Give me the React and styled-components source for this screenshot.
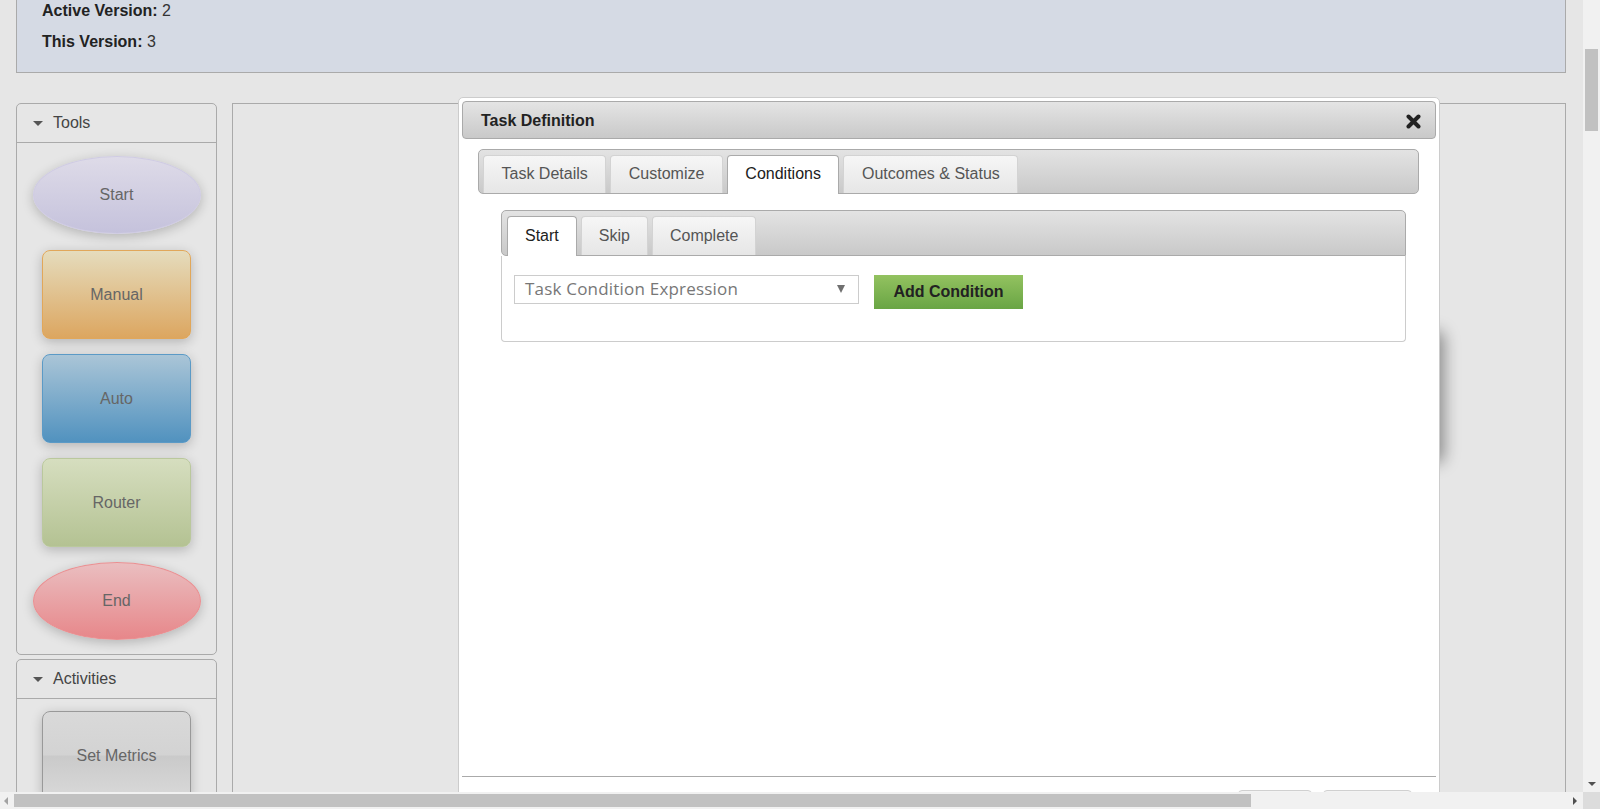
import React from 'react';
import styled, { createGlobalStyle, css } from 'styled-components';

const GlobalStyle = createGlobalStyle`
    html, body {
        margin: 0;
        padding: 0;
        overflow: hidden;
        background: #e6e6e6;
        font-family: "Liberation Sans", Arial, sans-serif;
    }
`;

const Viewport = styled.div`
    width: 1600px;
    height: 809px;
    display: grid;
    grid-template-columns: 1583px 17px;
    grid-template-rows: 792px 17px;
    overflow: hidden;
`;

const ScrollArea = styled.div`
    position: relative;
    overflow: hidden;
    background: #e6e6e6;
    padding: 0 17px 0 16px;
`;

const VersionBox = styled.div`
    margin-top: -11px;
    border: 1px solid #aaaaaa;
    background: #d5dae4;
    padding: 11px 25px 20px;
    display: flex;
    flex-direction: column;
    gap: 11px;
`;

const VersionLine = styled.div`
    font-size: 16px;
    line-height: 20px;
    color: #333;
    b {
        color: #222;
    }
`;

const MainRow = styled.div`
    display: flex;
    gap: 15px;
    margin-top: 30px;
    align-items: flex-start;
`;

const Sidebar = styled.div`
    width: 201px;
    flex-shrink: 0;
    display: flex;
    flex-direction: column;
    gap: 4px;
`;

const Panel = styled.div`
    border: 1px solid #aaaaaa;
    border-radius: 5px;
    background: #e6e6e6;
`;

const PanelHeader = styled.div`
    height: 38px;
    border-bottom: 1px solid #aaaaaa;
    display: flex;
    align-items: center;
    gap: 10px;
    padding-left: 16px;
    font-size: 16px;
    color: #444;
`;

const Caret = styled.span`
    width: 0;
    height: 0;
    border-left: 5px solid transparent;
    border-right: 5px solid transparent;
    border-top: 5px solid #555;
    margin-top: 1px;
`;

const PanelBody = styled.div`
    display: flex;
    flex-direction: column;
    align-items: center;
    gap: 15px;
    padding: ${(p) => p.$pad || '13px 0 14px'};
`;

const nodeLooks = {
    start: css`
        background: linear-gradient(#dedbe8, #c5c2dc);
        border-color: #cfcbe3;
        margin-bottom: 1px;
    `,
    manual: css`
        background: linear-gradient(#e5dcbd, #dca660);
        border-color: #e1a75a;
    `,
    auto: css`
        background: linear-gradient(#aac5d7, #5192bf);
        border-color: #5b9ac6;
    `,
    router: css`
        background: linear-gradient(#d6debf, #b4c293);
        border-color: #bac89d;
    `,
    end: css`
        background: linear-gradient(#eabec0, #e7878a);
        border-color: #ea8f91;
    `,
    metrics: css`
        background: linear-gradient(#d9d9d9 0%, #d3d3d3 49%, #cacaca 51%, #d9d9d9 100%);
        border-color: #999;
    `,
};

const Node = styled.div`
    box-sizing: border-box;
    display: flex;
    align-items: center;
    justify-content: center;
    font-size: 16px;
    color: #666;
    border: 1px solid;
    box-shadow: 0 3px 12px rgba(0, 0, 0, 0.22);
    flex-shrink: 0;
    ${(p) => p.$round
        ? css`
            width: 168px;
            height: 78px;
            border-radius: 50%;
        `
        : css`
            width: 149px;
            height: 89px;
            border-radius: 8px;
        `}
    ${(p) => nodeLooks[p.$kind]}
`;

const Canvas = styled.div`
    position: relative;
    flex: 1;
    height: 760px;
    border: 1px solid #aaaaaa;
    background: #e6e6e6;
`;

const HiddenNode = styled.div`
    position: absolute;
    left: 1067px;
    top: 225px;
    width: 140px;
    height: 132px;
    border-radius: 8px;
    background: #d8d8d8;
    box-shadow: 4px 2px 16px rgba(0, 0, 0, 0.4);
`;

const Dialog = styled.div`
    position: absolute;
    left: 458px;
    top: 97px;
    width: 982px;
    height: 760px;
    box-sizing: border-box;
    border: 1px solid #cccccc;
    border-radius: 5px;
    background: #ffffff;
    padding: 3px;
    display: flex;
    flex-direction: column;
`;

const TitleBar = styled.div`
    height: 35px;
    border: 1px solid #aaaaaa;
    border-radius: 4px;
    background: linear-gradient(#e4e4e4, #c9c9c9);
    display: flex;
    align-items: center;
    justify-content: space-between;
    padding: 1px 14px 0 18px;
    font-size: 16px;
    font-weight: bold;
    color: #222;
`;

const CloseButton = styled.span`
    display: flex;
    margin-top: 1px;
`;

const DialogBody = styled.div`
    height: 627px;
    padding: 10px 17px 0 16px;
`;

const TabBar = styled.div`
    display: flex;
    align-items: flex-end;
    gap: 4px;
    height: 38px;
    padding: 5px 5px 0 4px;
    border: 1px solid #aaaaaa;
    border-radius: 5px;
    background: linear-gradient(#e3e3e3, #c9c9c9);
    ${(p) => p.$inner && css`
        height: 39px;
        padding-left: 5px;
        border-radius: 5px 5px 0 5px;
    `}
`;

const Tab = styled.div`
    box-sizing: border-box;
    height: ${(p) => (p.$inner ? '39px' : '38px')};
    line-height: ${(p) => (p.$inner ? '37px' : '35px')};
    padding: ${(p) => (p.$inner ? '0 17px' : '0 17.5px')};
    border: 1px solid #d3d3d3;
    border-bottom: 0;
    border-radius: 4px 4px 0 0;
    background: linear-gradient(#f6f6f6, #e6e6e6);
    font-size: 16px;
    color: #555;
    white-space: nowrap;
    ${(p) => p.$active && css`
        height: ${p.$inner ? '40px' : '39px'};
        margin-bottom: -1px;
        line-height: ${p.$inner ? '37px' : '36px'};
        background: #ffffff;
        border-color: #aaaaaa;
        color: #212121;
    `}
`;

const TabContent = styled.div`
    padding: 16px 13px 0 23px;
`;

const ConditionPanel = styled.div`
    display: flex;
    align-items: flex-start;
    gap: 15px;
    padding: 19px 12px 32px;
    border: 1px solid #cccccc;
    border-top: 0;
    border-radius: 0 0 4px 4px;
`;

const Select = styled.div`
    box-sizing: border-box;
    width: 345px;
    height: 29px;
    border: 1px solid #cccccc;
    background: #fff;
    display: flex;
    align-items: center;
    justify-content: space-between;
    padding: 0 10px 2px 10px;
    font-family: "Open Sans", "Noto Sans", sans-serif;
    font-size: 17px;
    letter-spacing: 0.2px;
    color: #777;
`;

const SelectArrow = styled.span`
    width: 0;
    height: 0;
    border-left: 4px solid transparent;
    border-right: 4px solid transparent;
    border-top: 8px solid #707070;
    margin-right: 3px;
`;

const AddButton = styled.button`
    width: 149px;
    height: 34px;
    border: 0;
    padding: 0;
    background: linear-gradient(#93c260, #69a544);
    font-family: "Liberation Sans", Arial, sans-serif;
    font-size: 16px;
    font-weight: bold;
    color: #222;
`;

const Footer = styled.div`
    border-top: 1px solid #aaaaaa;
    display: flex;
    justify-content: flex-end;
    gap: 11px;
    padding: 13px 24px 0 0;
`;

const FooterButton = styled.button`
    width: ${(p) => p.$w}px;
    height: 32px;
    border: 1px solid #d0d0d0;
    border-radius: 4px;
    background: #f3f3f3;
`;

const VScroll = styled.div`
    background: #f1f1f1;
    display: flex;
    flex-direction: column;
    align-items: center;
    justify-content: space-between;
    padding: 49px 0 6px;
    box-sizing: border-box;
`;

const HScroll = styled.div`
    background: #f1f1f1;
    display: flex;
    align-items: center;
    padding: 0 6px 0 4px;
    gap: 6px;
`;

const Thumb = styled.div`
    background: #c1c1c1;
    ${(p) => p.$vertical
        ? css`
            width: 13px;
            height: 82px;
        `
        : css`
            width: 1237px;
            height: 13px;
        `}
`;

const Arrow = styled.span`
    width: 0;
    height: 0;
    ${(p) => p.$dir === 'down' && css`
        border-left: 4px solid transparent;
        border-right: 4px solid transparent;
        border-top: 4px solid #505050;
    `}
    ${(p) => p.$dir === 'left' && css`
        border-top: 4px solid transparent;
        border-bottom: 4px solid transparent;
        border-right: 4px solid #a3a3a3;
    `}
    ${(p) => p.$dir === 'right' && css`
        border-top: 4px solid transparent;
        border-bottom: 4px solid transparent;
        border-left: 4px solid #505050;
        margin-left: auto;
    `}
`;

const Corner = styled.div`
    background: #dcdcdc;
`;

const CloseIcon = () => (
    <svg width="15" height="15" viewBox="0 0 15 15">
        <path d="M2.5 2.5 L12.5 12.5 M12.5 2.5 L2.5 12.5" stroke="#222" strokeWidth="4" strokeLinecap="round" />
    </svg>
);

const tools = [
    { label: 'Start', kind: 'start', round: true },
    { label: 'Manual', kind: 'manual' },
    { label: 'Auto', kind: 'auto' },
    { label: 'Router', kind: 'router' },
    { label: 'End', kind: 'end', round: true },
];

const mainTabs = ['Task Details', 'Customize', 'Conditions', 'Outcomes & Status'];
const conditionTabs = ['Start', 'Skip', 'Complete'];

const App = () => {
    return (
        <>
            <GlobalStyle />
            <Viewport>
                <ScrollArea>
                    <VersionBox>
                        <VersionLine><b>Active Version:</b> 2</VersionLine>
                        <VersionLine><b>This Version:</b> 3</VersionLine>
                    </VersionBox>
                    <MainRow>
                        <Sidebar>
                            <Panel>
                                <PanelHeader><Caret />Tools</PanelHeader>
                                <PanelBody>
                                    {tools.map((t) => (
                                        <Node key={t.label} $kind={t.kind} $round={t.round}>{t.label}</Node>
                                    ))}
                                </PanelBody>
                            </Panel>
                            <Panel>
                                <PanelHeader><Caret />Activities</PanelHeader>
                                <PanelBody $pad="12px 0 14px">
                                    <Node $kind="metrics">Set Metrics</Node>
                                </PanelBody>
                            </Panel>
                        </Sidebar>
                        <Canvas>
                            <HiddenNode />
                        </Canvas>
                    </MainRow>
                    <Dialog>
                        <TitleBar>
                            Task Definition
                            <CloseButton><CloseIcon /></CloseButton>
                        </TitleBar>
                        <DialogBody>
                            <TabBar>
                                {mainTabs.map((t) => (
                                    <Tab key={t} $active={t === 'Conditions'}>{t}</Tab>
                                ))}
                            </TabBar>
                            <TabContent>
                                <TabBar $inner>
                                    {conditionTabs.map((t) => (
                                        <Tab key={t} $inner $active={t === 'Start'}>{t}</Tab>
                                    ))}
                                </TabBar>
                                <ConditionPanel>
                                    <Select>
                                        Task Condition Expression
                                        <SelectArrow />
                                    </Select>
                                    <AddButton>Add Condition</AddButton>
                                </ConditionPanel>
                            </TabContent>
                        </DialogBody>
                        <Footer>
                            <FooterButton $w={74} />
                            <FooterButton $w={89} />
                        </Footer>
                    </Dialog>
                </ScrollArea>
                <VScroll>
                    <Thumb $vertical />
                    <Arrow $dir="down" />
                </VScroll>
                <HScroll>
                    <Arrow $dir="left" />
                    <Thumb />
                    <Arrow $dir="right" />
                </HScroll>
                <Corner />
            </Viewport>
        </>
    );
};

export default App;
